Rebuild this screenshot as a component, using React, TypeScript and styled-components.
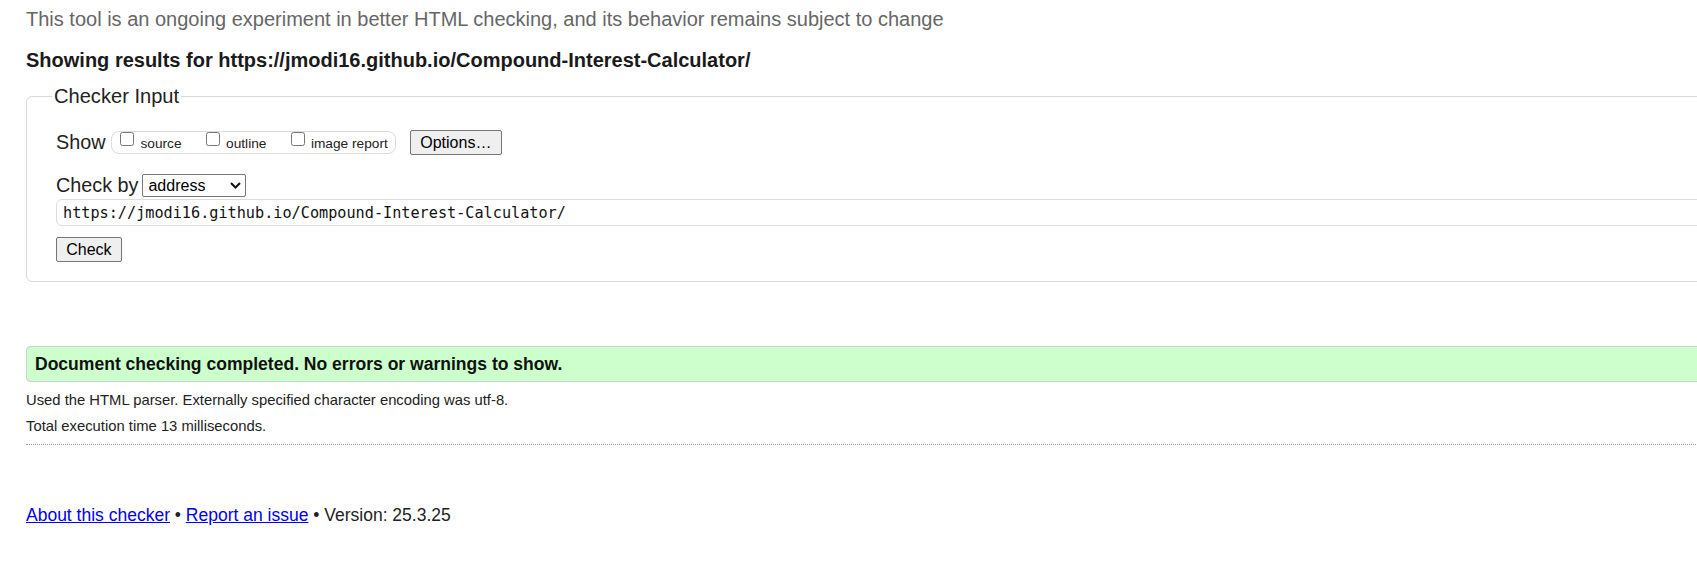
import React from 'react';
import styled, { createGlobalStyle } from 'styled-components';

const GlobalStyle = createGlobalStyle`
  html, body {
    margin: 0;
    padding: 0;
    background: #ffffff;
    overflow: hidden;
  }
  body {
    font-family: "Liberation Sans", Arial, sans-serif;
    color: #222222;
  }
`;

const Page = styled.div`
  width: 1900px;
  padding: 8px 0 0 26px;
  display: flex;
  flex-direction: column;
`;

const Intro = styled.p`
  margin: 0;
  font-size: 20px;
  line-height: 23px;
  color: #666666;
`;

const Heading = styled.h2`
  margin: 16.5px 0 0;
  font-size: 20px;
  line-height: 24px;
  font-weight: bold;
  color: #1a1a1a;
`;

const InputBox = styled.fieldset`
  margin: 13px 0 0;
  padding: 0 0 19px 29px;
  border: 1px solid #d9d9d9;
  border-radius: 6px;
  min-width: 0;
  display: flex;
  flex-direction: column;
  align-items: flex-start;
`;

const Legend = styled.legend`
  margin-left: -4px;
  padding: 0 2px;
  font-size: 20.1px;
  line-height: 23px;
  color: #222222;
`;

const Row = styled.div<{ $top: number; $height: number }>`
  display: flex;
  align-items: center;
  margin-top: ${(p) => p.$top}px;
  height: ${(p) => p.$height}px;
`;

const RowLabel = styled.span`
  font-size: 19.8px;
  line-height: 23px;
  color: #222222;
`;

const ToggleGroup = styled.div`
  display: flex;
  align-items: flex-start;
  gap: 24.5px;
  box-sizing: border-box;
  height: 23px;
  margin-left: 6px;
  padding: 0 7.5px 0 8px;
  border: 1px solid #dcdcdc;
  border-radius: 8px;
`;

const Toggle = styled.label`
  display: flex;
  align-items: flex-start;
`;

const Checkbox = styled.input`
  width: 14px;
  height: 14px;
  margin: 0 6px 0 0;
`;

const ToggleText = styled.span`
  padding-top: 4px;
  font-size: 13.7px;
  line-height: 16px;
  color: #222222;
`;

const Button = styled.button<{ $pad: number; $gap?: number }>`
  box-sizing: border-box;
  height: 25px;
  margin-left: ${(p) => p.$gap ?? 0}px;
  padding: 0 ${(p) => p.$pad}px;
  font-family: "Liberation Sans", Arial, sans-serif;
  font-size: 16px;
  color: #000000;
  background: #efefef;
  border: 1px solid #767676;
  border-radius: 2px;
`;

const SelectWrap = styled.div`
  position: relative;
  margin-left: 4px;
`;

const Select = styled.select`
  appearance: none;
  box-sizing: border-box;
  width: 104px;
  height: 23px;
  padding: 0 0 0 5px;
  font-family: "Liberation Sans", Arial, sans-serif;
  font-size: 16px;
  color: #000000;
  background: #ffffff;
  border: 1px solid #767676;
  border-radius: 2px;
`;

const Chevron = styled.svg`
  position: absolute;
  right: 5px;
  top: 8px;
  pointer-events: none;
`;

const UrlInput = styled.input`
  box-sizing: border-box;
  width: 100%;
  height: 27px;
  margin-top: 2.5px;
  padding: 0 6px;
  font-family: "DejaVu Sans Mono", "Liberation Mono", monospace;
  font-size: 15.2px;
  color: #111111;
  background: #ffffff;
  border: 1px solid #dcdcdc;
  border-radius: 6px;
`;

const CheckRow = styled.div`
  margin-top: 11px;
`;

const Success = styled.p`
  box-sizing: border-box;
  margin: 64px 0 0;
  height: 36px;
  padding: 0 8px;
  display: flex;
  align-items: center;
  font-size: 17.55px;
  font-weight: bold;
  color: #111111;
  background: #ccffcc;
  border: 1px solid #cfcfcf;
  border-radius: 4px;
`;

const Details = styled.div`
  margin-top: 4.75px;
  padding-bottom: 4.5px;
  border-bottom: 1px dotted #9a9a9a;
`;

const DetailLine = styled.p`
  margin: 0;
  font-size: 14.8px;
  line-height: 26.5px;
  color: #222222;
`;

const Footer = styled.p`
  margin: 58px 0 0;
  font-size: 17.5px;
  line-height: 24px;
  color: #222222;
`;

const Link = styled.a`
  color: #0000ee;
  text-decoration: underline;
`;

export default function App() {
  const url = 'https://jmodi16.github.io/Compound-Interest-Calculator/';
  return (
    <>
      <GlobalStyle />
      <Page>
        <Intro>This tool is an ongoing experiment in better HTML checking, and its behavior remains subject to change</Intro>
        <Heading>Showing results for {url}</Heading>
        <InputBox>
          <Legend>Checker Input</Legend>
          <Row $top={22.5} $height={25}>
            <RowLabel>Show</RowLabel>
            <ToggleGroup>
              <Toggle>
                <Checkbox type="checkbox" />
                <ToggleText>source</ToggleText>
              </Toggle>
              <Toggle>
                <Checkbox type="checkbox" />
                <ToggleText>outline</ToggleText>
              </Toggle>
              <Toggle>
                <Checkbox type="checkbox" />
                <ToggleText>image report</ToggleText>
              </Toggle>
            </ToggleGroup>
            <Button $pad={9.5} $gap={13.5}>Options…</Button>
          </Row>
          <Row $top={18.5} $height={23}>
            <RowLabel>Check by</RowLabel>
            <SelectWrap>
              <Select defaultValue="address">
                <option value="address">address</option>
                <option value="upload">file upload</option>
                <option value="text">text input</option>
              </Select>
              <Chevron width="11" height="7" viewBox="0 0 11 7">
                <path d="M1 1 L5.5 5.5 L10 1" fill="none" stroke="#111" strokeWidth="2" />
              </Chevron>
            </SelectWrap>
          </Row>
          <UrlInput type="url" defaultValue={url} />
          <CheckRow>
            <Button $pad={9.2}>Check</Button>
          </CheckRow>
        </InputBox>
        <Success>Document checking completed. No errors or warnings to show.</Success>
        <Details>
          <DetailLine>Used the HTML parser. Externally specified character encoding was utf-8.</DetailLine>
          <DetailLine>Total execution time 13 milliseconds.</DetailLine>
        </Details>
        <Footer>
          <Link href="#about">About this checker</Link> • <Link href="#issue">Report an issue</Link> • Version: 25.3.25
        </Footer>
      </Page>
    </>
  );
}
